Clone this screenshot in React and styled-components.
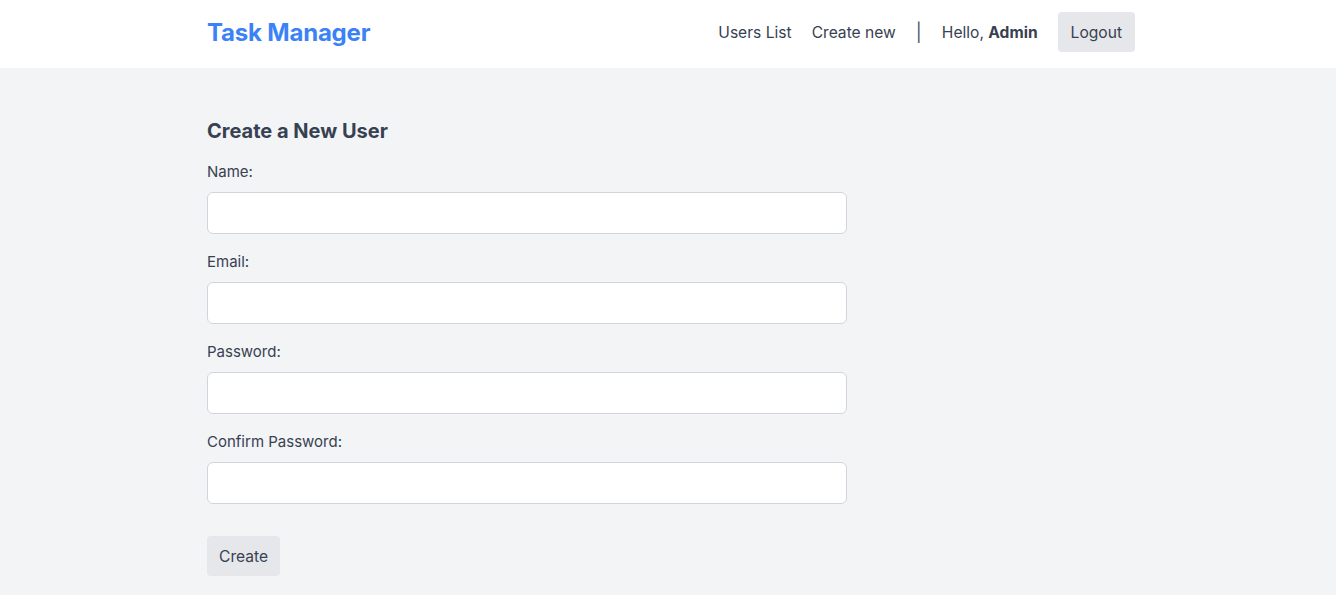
import React from "react";
import styled, { createGlobalStyle } from "styled-components";

const Global = createGlobalStyle`
  html, body { margin: 0; padding: 0; }
  body {
    background: #f3f4f6;
    font-family: Inter, "Noto Sans", sans-serif;
    color: #374151;
  }
  * { box-sizing: border-box; }
`;

const Header = styled.header`
  background: #ffffff;
  height: 68px;
  padding: 12px 0 16px;
`;

const Container = styled.div`
  padding: 0 201px 0 207px;
`;

const HeaderInner = styled(Container)`
  height: 100%;
  display: flex;
  align-items: center;
  justify-content: space-between;
`;

const Brand = styled.a`
  font-size: 24px;
  font-weight: 700;
  color: #3b82f6;
  text-decoration: none;
  letter-spacing: -0.2px;
`;

const Nav = styled.nav`
  display: flex;
  align-items: center;
  font-size: 15.6px;
`;

const NavLink = styled.a`
  color: #374151;
  text-decoration: none;
  margin-right: 20px;
`;

const Sep = styled.span`
  color: #4b5563;
  margin: 0 20px 0 0;
  font-size: 18px;
`;

const Greeting = styled.span`
  margin-right: 20px;
  b { font-weight: 700; }
`;

const Button = styled.button`
  font-family: inherit;
  font-size: 15.6px;
  color: #374151;
  background: #e5e7eb;
  border: none;
  border-radius: 4px;
  height: 40px;
  padding: 0 ${(p) => p.$px || 12}px;
  cursor: pointer;
`;

const Main = styled(Container)`
  padding-top: 51px;
`;

const Title = styled.h2`
  margin: 0 0 19px;
  font-size: 20px;
  font-weight: 700;
  line-height: 24px;
`;

const Form = styled.form`
  width: 640px;
  display: flex;
  flex-direction: column;
`;

const Field = styled.div`
  display: flex;
  flex-direction: column;
  margin-bottom: 18px;
`;

const Label = styled.label`
  font-size: 15px;
  line-height: 20px;
  margin-bottom: 10px;
`;

const Input = styled.input`
  height: 42px;
  border: 1px solid #d1d5db;
  border-radius: 6px;
  background: #fff;
  padding: 0 12px;
  font-family: inherit;
  font-size: 15px;
  outline: none;
`;

const Actions = styled.div`
  margin-top: 14px;
`;

const fields = ["Name:", "Email:", "Password:", "Confirm Password:"];

export default function App() {
  return (
    <>
      <Global />
      <Header>
        <HeaderInner>
          <Brand href="#">Task Manager</Brand>
          <Nav>
            <NavLink href="#">Users List</NavLink>
            <NavLink href="#">Create new</NavLink>
            <Sep>|</Sep>
            <Greeting>
              Hello, <b>Admin</b>
            </Greeting>
            <Button type="button" $px={13}>Logout</Button>
          </Nav>
        </HeaderInner>
      </Header>
      <Main>
        <Title>Create a New User</Title>
        <Form onSubmit={(e) => e.preventDefault()}>
          {fields.map((f) => (
            <Field key={f}>
              <Label>{f}</Label>
              <Input type={f.includes("Password") ? "password" : f === "Email:" ? "email" : "text"} />
            </Field>
          ))}
          <Actions>
            <Button type="submit">Create</Button>
          </Actions>
        </Form>
      </Main>
    </>
  );
}
